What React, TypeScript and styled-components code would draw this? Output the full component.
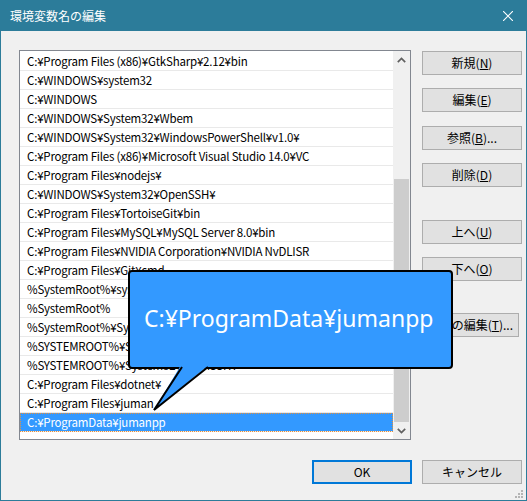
import React from "react";
import styled, { createGlobalStyle } from "styled-components";

const GlobalStyle = createGlobalStyle`
  html, body { margin: 0; padding: 0; background: #f0f0f0; }
  body { font-family: "Noto Sans CJK JP", "Noto Sans", sans-serif; }
  * { box-sizing: border-box; }
`;

const TEAL = "#2c7c9a";

const Window = styled.div`
  position: relative;
  width: 527px;
  height: 501px;
  display: flex;
  flex-direction: column;
  background: #f0f0f0;
  border: 1px solid ${TEAL};
  border-top: none;
  overflow: hidden;
`;

const TitleBar = styled.div`
  height: 31px;
  flex: none;
  display: flex;
  align-items: center;
  background: ${TEAL};
  color: #ffffff;
  padding-left: 9px;
  padding-right: 13px;
  font-size: 12px;
`;

const Title = styled.span`
  line-height: 1;
  margin-top: 1px;
`;

const CloseIcon = styled.svg`
  margin-left: auto;
  width: 10px;
  height: 10px;
`;

const Body = styled.div`
  flex: 1;
  display: flex;
  flex-direction: column;
  padding: 19px 4px 0 18px;
`;

const MainRow = styled.div`
  display: flex;
  align-items: flex-start;
  gap: 11px;
  height: 390px;
`;

const ListBox = styled.div`
  width: 392px;
  height: 390px;
  border: 1px solid #828790;
  background: #ffffff;
  display: flex;
`;

const Rows = styled.div`
  flex: 1;
  padding-top: 1px;
  overflow: hidden;
`;

const Row = styled.div<{ $selected?: boolean }>`
  height: 19px;
  border-bottom: 1px solid #e9e9e9;
  padding-left: 7px;
  font-size: 11.5px;
  letter-spacing: -0.2px;
  line-height: 18px;
  white-space: nowrap;
  color: ${(p) => (p.$selected ? "#ffffff" : "#000000")};
  background: ${(p) => (p.$selected ? "#3399ff" : "transparent")};
  outline: ${(p) => (p.$selected ? "1px dotted #e8903a" : "none")};
  outline-offset: -1px;
`;

const ScrollBar = styled.div`
  width: 17px;
  display: flex;
  flex-direction: column;
  background: #f0f0f0;
`;

const ArrowBox = styled.div`
  height: 17px;
  flex: none;
  display: flex;
  align-items: center;
  justify-content: center;
`;

const Track = styled.div`
  flex: 1;
  display: flex;
  flex-direction: column;
  justify-content: flex-end;
`;

const Thumb = styled.div<{ $h: number }>`
  height: ${(p) => p.$h}px;
  margin: 0 1px 0 1px;
  background: #cdcdcd;
`;

const ButtonColumn = styled.div`
  width: 100px;
  display: flex;
  flex-direction: column;
  padding-top: 1px;
`;

const Button = styled.div<{ $gap?: number; $primary?: boolean; $w?: number; $end?: boolean }>`
  height: 24px;
  width: ${(p) => (p.$w ? `${p.$w}px` : "100px")};
  margin-top: ${(p) => p.$gap ?? 0}px;
  background: #e1e1e1;
  border: ${(p) => (p.$primary ? "2px solid #0078d7" : "1px solid #adadad")};
  display: flex;
  align-items: center;
  justify-content: ${(p) => (p.$end ? "flex-end" : "center")};
  padding-right: ${(p) => (p.$end ? "5px" : "0")};
  font-size: 12px;
  line-height: 1;
  color: #000000;
  white-space: nowrap;
  overflow: visible;
`;

const Footer = styled.div`
  display: flex;
  justify-content: flex-end;
  gap: 10px;
  margin-top: 20px;
`;

const Callout = styled.div`
  position: absolute;
  left: 127px;
  top: 270px;
  width: 325px;
  height: 99px;
  background: #3399ff;
  border: 2px solid #000000;
  border-radius: 4px;
  display: flex;
  align-items: center;
  padding-left: 14px;
  padding-bottom: 4px;
  color: #ffffff;
  font-family: "Noto Sans", "Noto Sans CJK JP", sans-serif;
  font-size: 23px;
  white-space: nowrap;
`;

const Tail = styled.svg`
  position: absolute;
  left: 20px;
  top: 92px;
  width: 64px;
  height: 50px;
  overflow: visible;
`;

const Grip = styled.svg`
  position: absolute;
  right: 3px;
  bottom: 2px;
  width: 8px;
  height: 8px;
`;

const paths = [
  "C:¥Program Files (x86)¥GtkSharp¥2.12¥bin",
  "C:¥WINDOWS¥system32",
  "C:¥WINDOWS",
  "C:¥WINDOWS¥System32¥Wbem",
  "C:¥WINDOWS¥System32¥WindowsPowerShell¥v1.0¥",
  "C:¥Program Files (x86)¥Microsoft Visual Studio 14.0¥VC",
  "C:¥Program Files¥nodejs¥",
  "C:¥WINDOWS¥System32¥OpenSSH¥",
  "C:¥Program Files¥TortoiseGit¥bin",
  "C:¥Program Files¥MySQL¥MySQL Server 8.0¥bin",
  "C:¥Program Files¥NVIDIA Corporation¥NVIDIA NvDLISR",
  "C:¥Program Files¥Git¥cmd",
  "%SystemRoot%¥system32",
  "%SystemRoot%",
  "%SystemRoot%¥System32¥Wbem",
  "%SYSTEMROOT%¥System32¥WindowsPowerShell¥v1.0¥",
  "%SYSTEMROOT%¥System32¥OpenSSH¥",
  "C:¥Program Files¥dotnet¥",
  "C:¥Program Files¥juman",
  "C:¥ProgramData¥jumanpp",
];

const Chevron = ({ up }: { up?: boolean }) => (
  <svg width="9" height="6" viewBox="0 0 9 6">
    <path
      d={up ? "M0.8 5.2 L4.5 1.5 L8.2 5.2" : "M0.8 0.8 L4.5 4.5 L8.2 0.8"}
      fill="none"
      stroke="#606060"
      strokeWidth="1.7"
    />
  </svg>
);

export default function App() {
  return (
    <>
      <GlobalStyle />
      <Window>
        <TitleBar>
          <Title>環境変数名の編集</Title>
          <CloseIcon viewBox="0 0 10 10">
            <path d="M0 0 L10 10 M10 0 L0 10" stroke="#ffffff" strokeWidth="1.1" />
          </CloseIcon>
        </TitleBar>
        <Body>
          <MainRow>
            <ListBox>
              <Rows>
                {paths.map((p, i) => (
                  <Row key={i} $selected={i === paths.length - 1}>
                    {p}
                  </Row>
                ))}
              </Rows>
              <ScrollBar>
                <ArrowBox>
                  <Chevron up />
                </ArrowBox>
                <Track>
                  <Thumb $h={243} />
                </Track>
                <ArrowBox>
                  <Chevron />
                </ArrowBox>
              </ScrollBar>
            </ListBox>
            <ButtonColumn>
              <Button>新規(<u>N</u>)</Button>
              <Button $gap={13}>編集(<u>E</u>)</Button>
              <Button $gap={14}>参照(<u>B</u>)...</Button>
              <Button $gap={13}>削除(<u>D</u>)</Button>
              <Button $gap={33}>上へ(<u>U</u>)</Button>
              <Button $gap={13}>下へ(<u>O</u>)</Button>
              <Button $gap={32} $w={97} $end>
                テキストの編集(<u>T</u>)...
              </Button>
            </ButtonColumn>
          </MainRow>
          <Footer>
            <Button $primary>OK</Button>
            <Button>キャンセル</Button>
          </Footer>
        </Body>
        <Callout>
          C:¥ProgramData¥jumanpp
          <Tail viewBox="0 0 64 50">
            <polygon points="31,1 59,1 4,46" fill="#3399ff" />
            <polyline points="32,3 4,46 58,3" fill="none" stroke="#000000" strokeWidth="2" strokeLinejoin="miter" />
          </Tail>
        </Callout>
        <Grip viewBox="0 0 8 8">
          <g fill="#b4b4b4">
            <rect x="6" y="0" width="2" height="2" />
            <rect x="3" y="3" width="2" height="2" />
            <rect x="6" y="3" width="2" height="2" />
            <rect x="0" y="6" width="2" height="2" />
            <rect x="3" y="6" width="2" height="2" />
            <rect x="6" y="6" width="2" height="2" />
          </g>
        </Grip>
      </Window>
    </>
  );
}
